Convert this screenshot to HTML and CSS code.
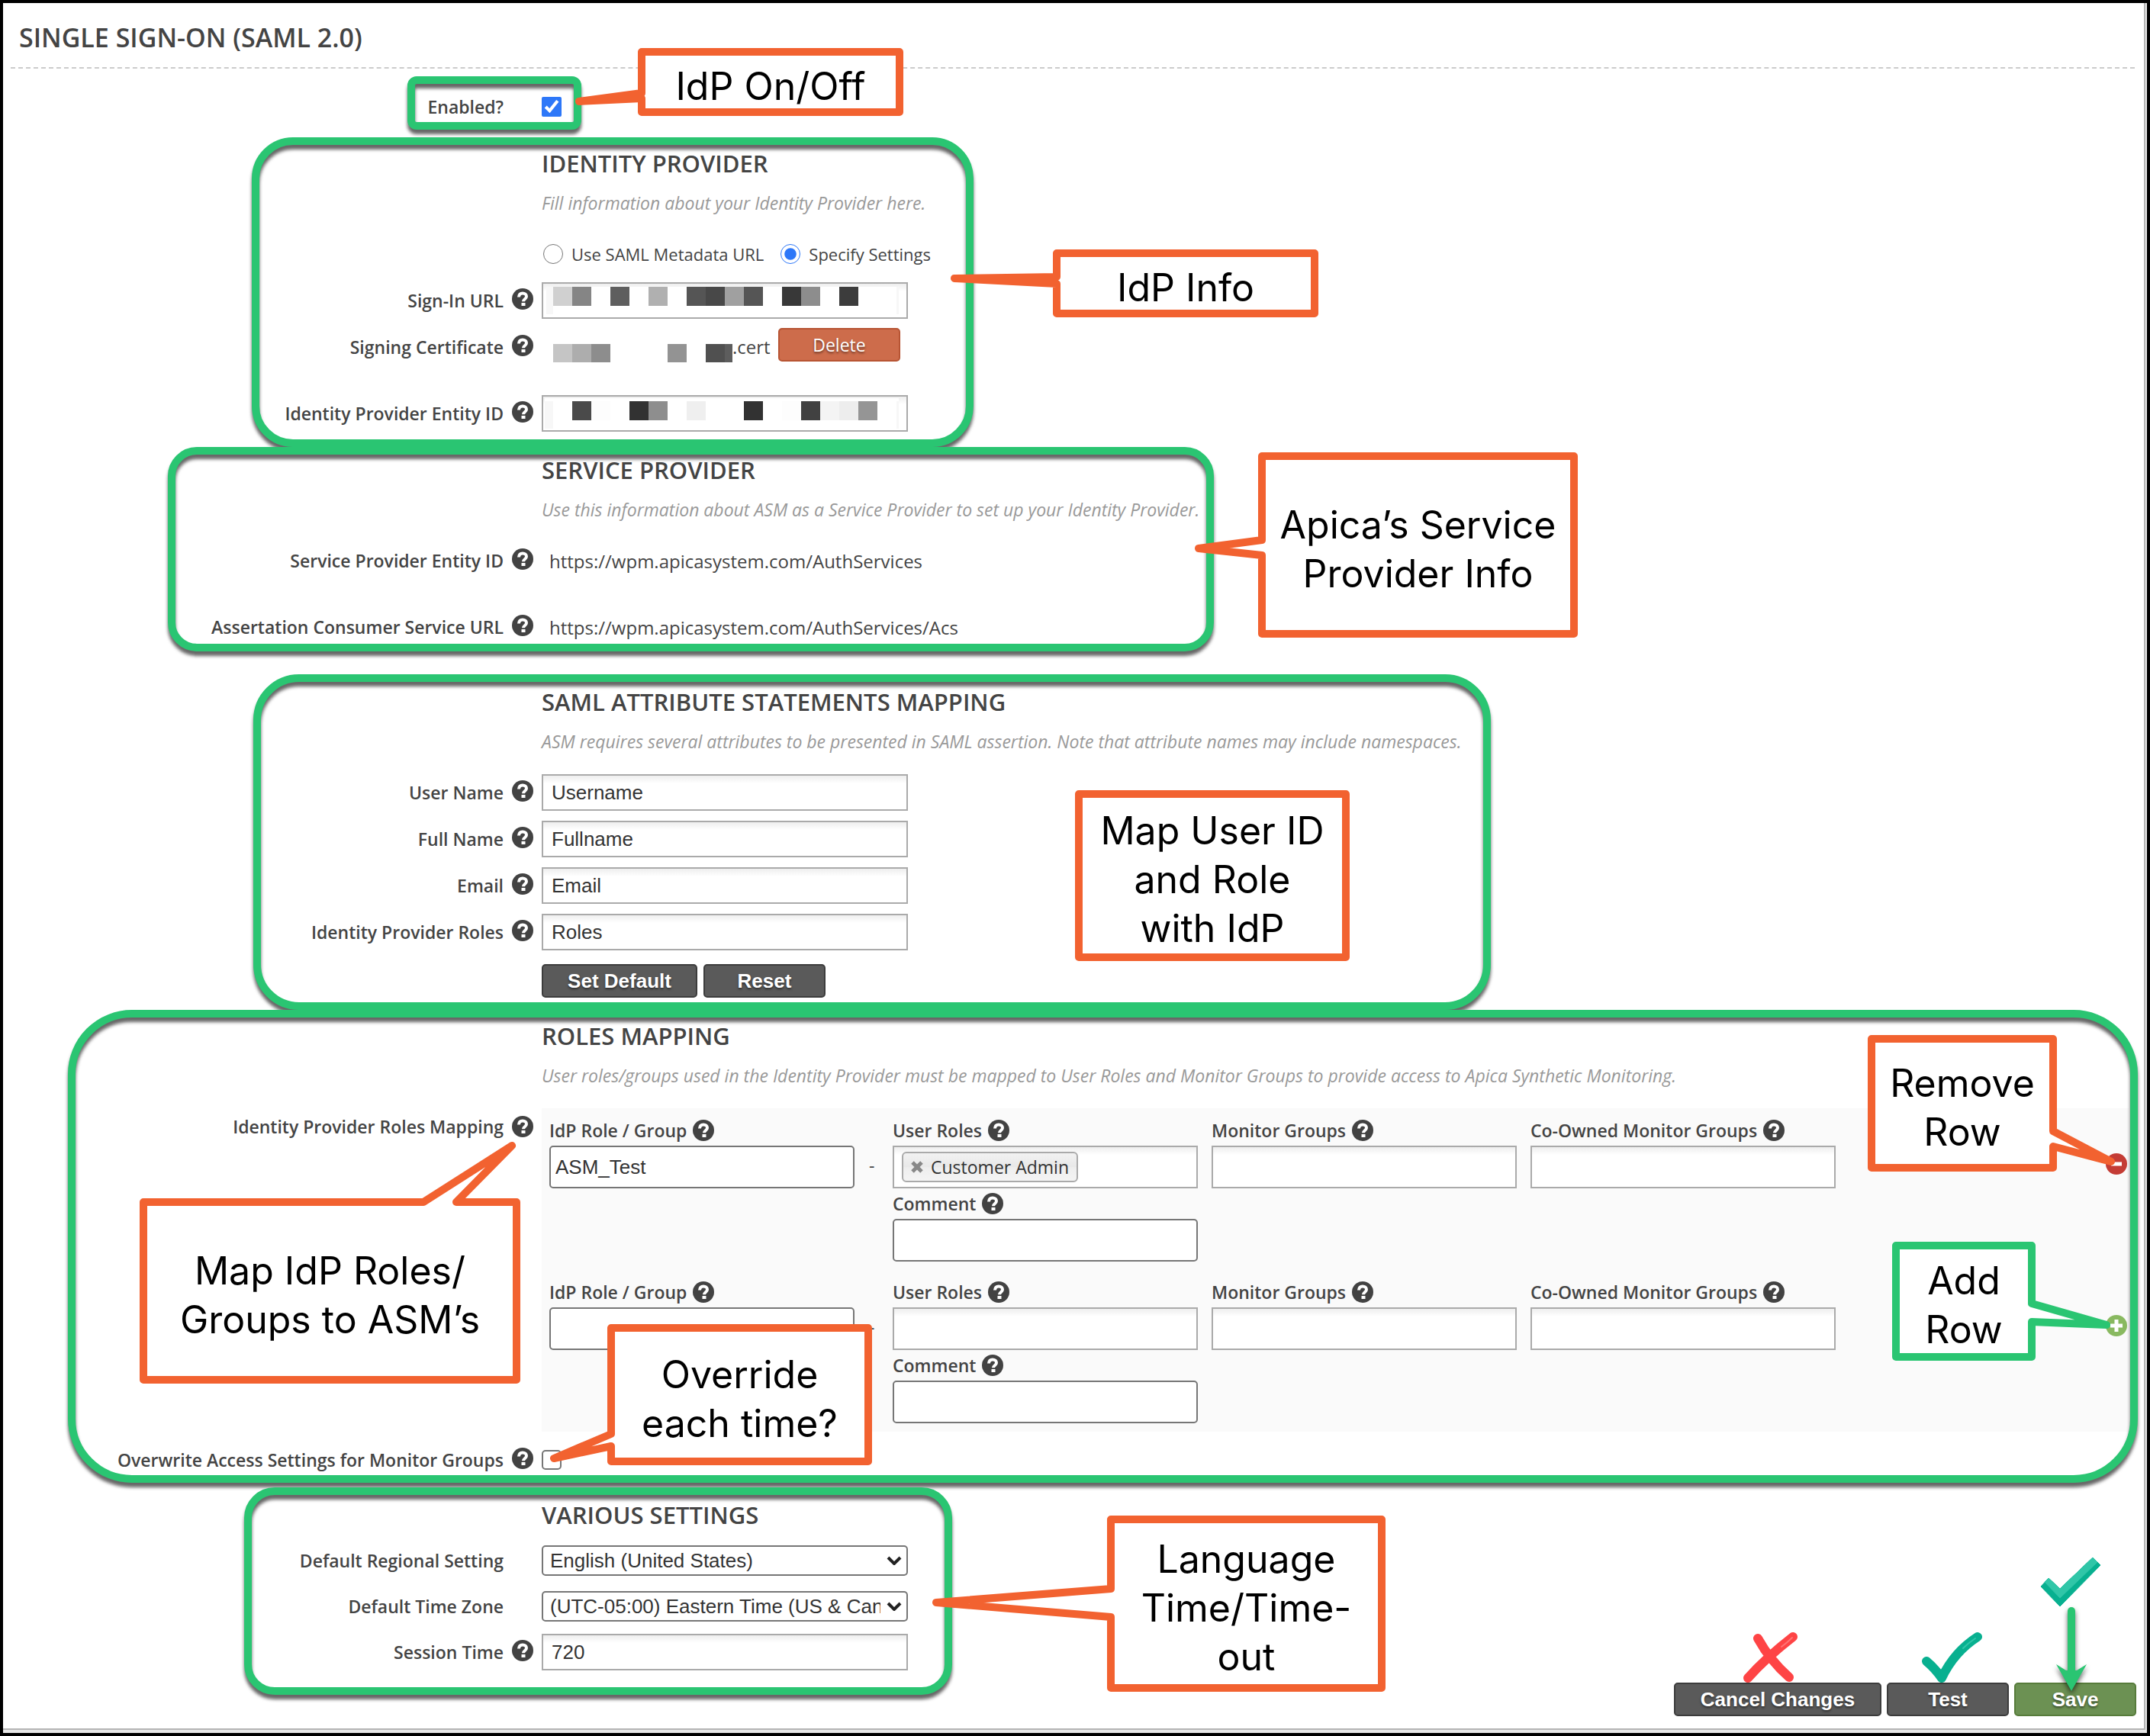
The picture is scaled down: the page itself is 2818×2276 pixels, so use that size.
FILE: index.html
```html
<!DOCTYPE html>
<html lang="en">
<head>
<meta charset="utf-8">
<title>Single Sign-On (SAML 2.0)</title>
<link rel="stylesheet" href="styles.css">
</head>
<body>
<svg class="defs" aria-hidden="true">
  <symbol id="help" viewBox="0 0 28 28">
    <circle cx="14" cy="14" r="14" fill="#424242"/>
    <path d="M9 11.500c.2-3.200 2.200-5 5-5 2.900 0 5 1.700 5 4.200 0 3.200-4 3.400-4 6.600" fill="none" stroke="#fff" stroke-width="4"/>
    <rect x="12.500" y="19" width="5" height="4" fill="#fff"/>
  </symbol>
  <symbol id="chevron" viewBox="0 0 20 12">
    <path d="M2 2l8 8 8-8" fill="none" stroke="#222" stroke-width="4"/>
  </symbol>
</svg>

<div class="shell">
<main class="page">
  <h1 class="title">Single Sign-On (SAML 2.0)</h1>

  <form class="form">
    <div class="row row--first">
      <label class="label" for="enabled">Enabled?</label><span></span>
      <div class="field"><input class="check" type="checkbox" id="enabled" checked></div>
    </div>

    <section class="section">
      <h2 class="heading">Identity Provider</h2>
      <p class="desc">Fill information about your Identity Provider here.</p>
      <div class="row row--lead">
        <span></span><span></span>
        <div class="field radios">
          <label class="radio"><input type="radio" name="mode">Use SAML Metadata URL</label>
          <label class="radio"><input type="radio" name="mode" checked>Specify Settings</label>
        </div>
      </div>
      <div class="row">
        <label class="label" for="signin">Sign-In URL</label><svg class="help"><use href="#help"/></svg>
        <div class="field">
          <input class="input" type="text" id="signin">
          <svg class="mask" viewBox="0 0 480 48" aria-hidden="true">
            <path fill="#fff" d="M6 6h462v36H6z"/><path fill="#f7f7f7" d="M6 6h9v36H6zM465 6h3v36h-3z"/>
            <path fill="#d0d0d0" d="M15 6h25v25H15z"/><path fill="#858585" d="M40 6h25v25H40z"/><path fill="#5e5e5e" d="M90 6h25v25H90z"/><path fill="#b0b0b0" d="M140 6h25v25h-25z"/><path fill="#555" d="M190 6h25v25h-25z"/><path fill="#484848" d="M215 6h25v25h-25z"/><path fill="#a0a0a0" d="M240 6h25v25h-25z"/><path fill="#555" d="M265 6h25v25h-25z"/><path fill="#383838" d="M315 6h25v25h-25z"/><path fill="#8d8d8d" d="M340 6h25v25h-25z"/><path fill="#3c3c3c" d="M390 6h25v25h-25z"/>
          </svg>
        </div>
      </div>
      <div class="row">
        <span class="label">Signing Certificate</span><svg class="help"><use href="#help"/></svg>
        <div class="field cert">
          <svg class="cert-mask" viewBox="0 0 250 48" aria-hidden="true">
            <path fill="#c5c5c5" d="M15 20h25v24H15z"/><path fill="#adadad" d="M40 20h25v24H40z"/><path fill="#8d8d8d" d="M65 20h25v24H65z"/><path fill="#939393" d="M165 20h25v24h-25z"/><path fill="#505050" d="M215 20h25v24h-25z"/><path fill="#5d5d5d" d="M240 20h10v24h-10z"/>
          </svg>
          <span class="cert-name">.cert</span>
          <button class="btn btn--delete" type="button">Delete</button>
        </div>
      </div>
      <div class="row row--spaced">
        <label class="label" for="entity">Identity Provider Entity ID</label><svg class="help"><use href="#help"/></svg>
        <div class="field">
          <input class="input" type="text" id="entity">
          <svg class="mask" viewBox="0 0 480 48" aria-hidden="true">
            <path fill="#fff" d="M4 4h464v40H4z"/><path fill="#f7f7f7" d="M4 8h11v36H4zM465 8h3v36h-3z"/>
            <path fill="#4a4a4a" d="M40 8h25v25H40z"/><path fill="#fdfdfd" d="M65 8h25v25H65z"/><path fill="#323232" d="M115 8h25v25h-25z"/><path fill="#8e8e8e" d="M140 8h25v25h-25z"/><path fill="#efefef" d="M190 8h25v25h-25z"/><path fill="#323232" d="M265 8h25v25h-25z"/><path fill="#fdfdfd" d="M315 8h25v25h-25z"/><path fill="#414141" d="M340 8h25v25h-25z"/><path fill="#f4f4f4" d="M365 8h25v25h-25z"/><path fill="#ededed" d="M390 8h25v25h-25z"/><path fill="#959595" d="M415 8h25v25h-25z"/>
          </svg>
        </div>
      </div>
    </section>

    <section class="section">
      <h2 class="heading">Service Provider</h2>
      <p class="desc">Use this information about ASM as a Service Provider to set up your Identity Provider.</p>
      <div class="row row--lead">
        <span class="label">Service Provider Entity ID</span><svg class="help"><use href="#help"/></svg>
        <div class="field value">https://wpm.apicasystem.com/AuthServices</div>
      </div>
      <div class="row row--spaced">
        <span class="label">Assertation Consumer Service URL</span><svg class="help"><use href="#help"/></svg>
        <div class="field value">https://wpm.apicasystem.com/AuthServices/Acs</div>
      </div>
    </section>

    <section class="section section--apart">
      <h2 class="heading">SAML Attribute Statements Mapping</h2>
      <p class="desc">ASM requires several attributes to be presented in SAML assertion. Note that attribute names may include namespaces.</p>
      <div class="row row--lead">
        <label class="label" for="user">User Name</label><svg class="help"><use href="#help"/></svg>
        <div class="field"><input class="input" type="text" id="user" value="Username"></div>
      </div>
      <div class="row">
        <label class="label" for="full">Full Name</label><svg class="help"><use href="#help"/></svg>
        <div class="field"><input class="input" type="text" id="full" value="Fullname"></div>
      </div>
      <div class="row">
        <label class="label" for="email">Email</label><svg class="help"><use href="#help"/></svg>
        <div class="field"><input class="input" type="text" id="email" value="Email"></div>
      </div>
      <div class="row">
        <label class="label" for="roles">Identity Provider Roles</label><svg class="help"><use href="#help"/></svg>
        <div class="field"><input class="input" type="text" id="roles" value="Roles"></div>
      </div>
      <div class="actions">
        <button class="btn btn--default" type="button">Set Default</button>
        <button class="btn" type="button">Reset</button>
      </div>
    </section>

    <section class="section">
      <h2 class="heading">Roles Mapping</h2>
      <p class="desc">User roles/groups used in the Identity Provider must be mapped to User Roles and Monitor Groups to provide access to Apica Synthetic Monitoring.</p>
      <div class="row row--lead row--top">
        <span class="label">Identity Provider Roles Mapping</span><svg class="help"><use href="#help"/></svg>
        <div class="panel">
          <div class="mapping">
            <div class="cell">
              <label class="cell-label" for="r1">IdP Role / Group <svg class="icon"><use href="#help"/></svg></label>
              <input class="box box--round" type="text" id="r1" value="ASM_Test">
            </div>
            <span class="dash">-</span>
            <div class="cell">
              <span class="cell-label">User Roles <svg class="icon"><use href="#help"/></svg></span>
              <div class="box tags">
                <span class="chip"><button class="chip-x" type="button" aria-label="Remove"><svg viewBox="0 0 16 16"><path d="M2 2l12 12M14 2L2 14" stroke="#888" stroke-width="5"/></svg></button>Customer Admin</span>
              </div>
              <label class="cell-label cell-label--next" for="c1">Comment <svg class="icon"><use href="#help"/></svg></label>
              <input class="box box--round" type="text" id="c1">
            </div>
            <div class="cell">
              <label class="cell-label" for="m1">Monitor Groups <svg class="icon"><use href="#help"/></svg></label>
              <input class="box" type="text" id="m1">
            </div>
            <div class="cell">
              <label class="cell-label" for="o1">Co-Owned Monitor Groups <svg class="icon"><use href="#help"/></svg></label>
              <input class="box" type="text" id="o1">
            </div>
            <button class="row-btn" type="button" aria-label="Remove row"><svg viewBox="0 0 28 28"><circle cx="14" cy="14" r="14" fill="#c43c35"/><path d="M7 14h14" stroke="#fff" stroke-width="5"/></svg></button>
          </div>
          <div class="mapping">
            <div class="cell">
              <label class="cell-label" for="r2">IdP Role / Group <svg class="icon"><use href="#help"/></svg></label>
              <input class="box box--round" type="text" id="r2">
            </div>
            <span class="dash">-</span>
            <div class="cell">
              <label class="cell-label" for="u2">User Roles <svg class="icon"><use href="#help"/></svg></label>
              <input class="box" type="text" id="u2">
              <label class="cell-label cell-label--next" for="c2">Comment <svg class="icon"><use href="#help"/></svg></label>
              <input class="box box--round" type="text" id="c2">
            </div>
            <div class="cell">
              <label class="cell-label" for="m2">Monitor Groups <svg class="icon"><use href="#help"/></svg></label>
              <input class="box" type="text" id="m2">
            </div>
            <div class="cell">
              <label class="cell-label" for="o2">Co-Owned Monitor Groups <svg class="icon"><use href="#help"/></svg></label>
              <input class="box" type="text" id="o2">
            </div>
            <button class="row-btn" type="button" aria-label="Add row"><svg viewBox="0 0 28 28"><circle cx="14" cy="14" r="14" fill="#89b960"/><path d="M6 14h16M14 6v16" stroke="#fff" stroke-width="5"/></svg></button>
          </div>
        </div>
      </div>
      <div class="row">
        <label class="label" for="overwrite">Overwrite Access Settings for Monitor Groups</label><svg class="help"><use href="#help"/></svg>
        <div class="field"><input class="check check--plain" type="checkbox" id="overwrite"></div>
      </div>
    </section>

    <section class="section section--close">
      <h2 class="heading">Various Settings</h2>
      <div class="row row--select">
        <label class="label" for="region">Default Regional Setting</label><span></span>
        <div class="field"><select class="select" id="region"><option>English (United States)</option></select><svg class="chevron"><use href="#chevron"/></svg></div>
      </div>
      <div class="row row--tight">
        <label class="label" for="zone">Default Time Zone</label><span></span>
        <div class="field"><select class="select" id="zone"><option>(UTC-05:00) Eastern Time (US &amp; Canada)</option></select><svg class="chevron"><use href="#chevron"/></svg></div>
      </div>
      <div class="row row--tight">
        <label class="label" for="session">Session Time</label><svg class="help"><use href="#help"/></svg>
        <div class="field"><input class="input" type="text" id="session" value="720"></div>
      </div>
    </section>

    <footer class="footer">
      <button class="btn btn--cancel" type="button">Cancel Changes</button>
      <button class="btn" type="button">Test</button>
      <button class="btn btn--save" type="submit">Save</button>
    </footer>
  </form>
</main>
</div>

<div class="outline outline--enabled"></div>
<div class="outline outline--idp"></div>
<div class="outline outline--sp"></div>
<div class="outline outline--attrs"></div>
<div class="outline outline--roles"></div>
<div class="outline outline--various"></div>

<div class="callout callout--onoff"><svg><path d="M5 5H343V84H5V66L-77 70L5 59Z"/></svg><span>IdP On/Off</span></div>
<div class="callout callout--info"><svg><path d="M5 5H343V84H5V45L-129 38L5 36Z"/></svg><span>IdP Info</span></div>
<div class="callout callout--service"><svg><path d="M5 5H414V238H5V135L-78 126L5 115Z"/></svg><span>Apica’s Service<br>Provider Info</span></div>
<div class="callout callout--map"><svg><path d="M5 5H355V219H5Z"/></svg><span>Map User ID<br>and Role<br>with IdP</span></div>
<div class="callout callout--groups"><svg><path d="M5 5H372L488 -69L415 5H494V238H5Z"/></svg><span>Map IdP Roles/<br>Groups to ASM’s</span></div>
<div class="callout callout--override"><svg><path d="M5 5H342V180H5V160L-70 176L5 144Z"/></svg><span>Override<br>each time?</span></div>
<div class="callout callout--remove"><svg><path d="M5 5H243V126L319 166L243 146V174H5Z"/></svg><span>Remove<br>Row</span></div>
<div class="callout callout--add"><svg><path d="M5 5H183V81L281 109L183 105V151H5Z"/></svg><span>Add<br>Row</span></div>
<div class="callout callout--lang"><svg><path d="M5 5H360V226H5V133L-224 114L5 96Z"/></svg><span>Language<br>Time/Time-<br>out</span></div>

<svg class="mark mark--cross" viewBox="0 0 76 68" aria-hidden="true">
  <path d="M66 7Q30 35 7 61M20 9Q36 38 61 60" fill="none" stroke="#fe4445" stroke-width="12" stroke-linecap="round"/>
  <path d="M65 8Q58 15 51 20" fill="none" stroke="#ff7474" stroke-width="2" stroke-linecap="round"/>
</svg>
<svg class="mark mark--tick" viewBox="0 0 82 68" aria-hidden="true">
  <path d="M7 39Q18 48 27 61Q43 27 74 7" fill="none" stroke="#08b090" stroke-width="12" stroke-linecap="round" stroke-linejoin="round"/>
  <path d="M71 9Q62 15 55 22" fill="none" stroke="#30c6a8" stroke-width="2" stroke-linecap="round"/>
</svg>
<svg class="mark mark--bold" viewBox="0 0 80 66" aria-hidden="true">
  <path d="M11 28L26 42L69 1L79 11L26 65L1 39Z" fill="#08b090" stroke="#08b090" stroke-linejoin="round"/>
  <path d="M6 33L11 28L26 42L69 1L75 7L26 54Z" fill="#30c6a8" stroke="#30c6a8" stroke-linejoin="round"/>
</svg>
<svg class="mark mark--arrow" viewBox="0 0 40 112" aria-hidden="true">
  <path d="M20 5V92" stroke="#2ac572" stroke-width="10" stroke-linecap="round"/>
  <path d="M0 75L13 83H27L40 75L20 110Z" fill="#2ac572"/>
</svg>
</body>
</html>
```

FILE: styles.css
```css
* { box-sizing: border-box; }

body {
  position: relative;
  margin: 0;
  padding: 4px;
  background: #000;
  color: #444;
  font-family: "Open Sans", "Noto Sans", sans-serif;
  font-size: 23px;
}

.defs { display: none; }

.shell {
  padding: 0 2px 4px 0;
  background: #e8e8e8;
}

.page {
  padding-top: 25px;
  border: solid #b4b4b4;
  border-width: 0 2px 2px 0;
  background: #fff;
}

.title {
  margin: 0 12px 0 10px;
  padding: 0 11px 19px;
  border-bottom: 2px dashed #ccc;
  font-size: 34px;
  font-weight: 600;
  line-height: 40px;
  text-transform: uppercase;
}

/* Form rows: label, help icon, field */
.row {
  display: grid;
  grid-template-columns: 656px 28px 1fr;
  column-gap: 11px;
  align-items: center;
  min-height: 48px;
  margin-top: 13px;
}
.row--first { margin-top: 26px; }
.row--lead { margin-top: 27px; }
.row--spaced { margin-top: 39px; }
.row--select { margin-top: 16px; }
.row--tight { margin-top: 12px; }
.row--top { align-items: start; }
.row--top > .help { margin-top: 10px; }

.label {
  font-weight: 600;
  line-height: 48px;
  text-align: right;
}
.help { width: 28px; height: 28px; margin-bottom: 4px; }

.field {
  position: relative;
  display: flex;
  align-items: center;
  width: 480px;
  height: 48px;
}

.section { margin-top: 30px; }
.section--apart { margin-top: 54px; }
.section--close { margin-top: 28px; }

.heading, .desc { margin: 0 0 0 706px; }
.heading {
  font-size: 31px;
  font-weight: 600;
  line-height: 40px;
  text-transform: uppercase;
}
.desc {
  margin-top: 16px;
  color: #999;
  font-style: italic;
  line-height: 32px;
}

.value { width: auto; padding-left: 10px; font-size: 24px; }

input, select, button { font-family: "Liberation Sans", Arial, sans-serif; font-size: 26px; }

.check {
  width: 26px;
  height: 26px;
  margin: 0;
  accent-color: #2d77f8;
}
.check--plain {
  appearance: none;
  border: 2px solid #767676;
  border-radius: 5px;
  background: #fff;
}

.radios { width: auto; gap: 20px; }
.radio { display: flex; align-items: center; gap: 11px; font-size: 22px; }
.radio input {
  width: 26px;
  height: 26px;
  margin: 0 0 0 2px;
  accent-color: #2d77f8;
}

.input, .box {
  width: 100%;
  height: 48px;
  padding: 0 11px;
  border: 2px solid #aaa;
  background: #fff linear-gradient(#eee, #fff 10px) no-repeat;
  color: #333;
}

.mask { position: absolute; inset: 0; pointer-events: none; }

.cert { font-size: 24px; }
.cert-mask { width: 250px; height: 48px; }
.cert-name { width: 60px; line-height: 48px; }

.select {
  width: 100%;
  height: 40px;
  padding: 0 34px 0 9px;
  border: 2px solid #767676;
  border-radius: 5px;
  appearance: none;
  background: #fff;
  color: #333;
}
.chevron {
  position: absolute;
  right: 8px;
  width: 20px;
  height: 12px;
  pointer-events: none;
}

.btn {
  width: 160px;
  height: 44px;
  padding: 0;
  border: 2px solid #3c3c3c;
  border-radius: 5px;
  background: #5a5a5a;
  color: #fff;
  font-weight: 700;
  text-shadow: 0 2px 3px rgba(0, 0, 0, .5);
}
.btn--delete {
  margin-bottom: 6px;
  border-color: #b75433;
  background: #cd6c4b;
  font-family: "Open Sans", sans-serif;
  font-size: 23px;
  font-weight: 400;
}
.btn--default { width: 204px; }
.btn--cancel { width: 272px; }
.btn--save { border-color: #577c3b; background: #6c9153; }

.actions {
  display: flex;
  gap: 8px;
  margin: 18px 0 0 706px;
}

/* Roles mapping */
.panel {
  margin-right: 20px;
  padding-left: 10px;
  background: #fafafa;
}
.mapping {
  display: flex;
  align-items: flex-start;
  height: 212px;
  padding-top: 13px;
}
.cell { width: 400px; }
.cell + .cell { margin-left: 18px; }
.cell-label {
  display: flex;
  align-items: center;
  gap: 8px;
  margin-bottom: 4px;
  font-weight: 600;
  line-height: 32px;
}
.cell-label--next { margin-top: 4px; }
.icon { width: 28px; height: 28px; }
.box { display: block; height: 56px; }
.box--round {
  padding: 0 6px;
  border-color: #767676;
  border-radius: 5px;
  background: #fff;
}
.dash { width: 50px; padding: 0 19px; line-height: 124px; }
.tags { display: flex; align-items: center; padding: 0 10px; }
.chip {
  display: flex;
  align-items: center;
  gap: 10px;
  height: 40px;
  padding: 0 10px;
  border: 2px solid #aaa;
  border-radius: 6px;
  background: linear-gradient(#f2f2f2, #e8e8e8 50%, #eee 52%, #f4f4f4);
  color: #333;
  line-height: 32px;
}
.chip-x, .row-btn { padding: 0; border: 0; background: none; }
.chip-x { width: 16px; height: 16px; }
.chip-x svg, .row-btn svg { display: block; }
.row-btn { width: 28px; height: 28px; margin: 46px 2px 0 auto; }

.footer {
  display: flex;
  justify-content: flex-end;
  gap: 7px;
  padding: 16px 10px;
}

/* Highlight outlines drawn over the form */
.outline {
  position: absolute;
  border: 10px solid #2ac572;
  filter: drop-shadow(0 6px 2px rgba(0, 0, 0, .6));
  pointer-events: none;
}
.outline--enabled { left: 534px; top: 100px; width: 228px; height: 70px; border-radius: 12px; }
.outline--idp { left: 330px; top: 180px; width: 946px; height: 406px; border-radius: 54px; }
.outline--sp { left: 220px; top: 586px; width: 1371px; height: 268px; border-radius: 38px; }
.outline--attrs { left: 332px; top: 884px; width: 1622px; height: 440px; border-radius: 60px; }
.outline--roles { left: 89px; top: 1324px; width: 2713px; height: 620px; border-radius: 84px; }
.outline--various { left: 320px; top: 1950px; width: 928px; height: 272px; border-radius: 40px; }

/* Callouts */
.callout {
  position: absolute;
  display: flex;
  align-items: center;
  justify-content: center;
  padding-top: 10px;
  color: #000;
  font-family: Inter, "Liberation Sans", sans-serif;
  font-size: 50px;
  line-height: 64px;
  text-align: center;
  white-space: nowrap;
}
.callout svg {
  position: absolute;
  inset: 0;
  width: 100%;
  height: 100%;
  overflow: visible;
}
.callout path {
  fill: #fff;
  stroke: #f26230;
  stroke-width: 10;
  stroke-linejoin: round;
}
.callout span { position: relative; }
.callout--onoff { left: 836px; top: 63px; width: 348px; height: 89px; }
.callout--info { left: 1380px; top: 327px; width: 348px; height: 89px; }
.callout--service { left: 1649px; top: 593px; width: 419px; height: 243px; }
.callout--map { left: 1409px; top: 1036px; width: 360px; height: 224px; }
.callout--groups { left: 183px; top: 1571px; width: 499px; height: 243px; }
.callout--override { left: 796px; top: 1736px; width: 347px; height: 185px; }
.callout--remove { left: 2448px; top: 1357px; width: 248px; height: 179px; }
.callout--add { left: 2480px; top: 1628px; width: 188px; height: 156px; }
.callout--add path { stroke: #2ac572; }
.callout--lang { left: 1451px; top: 1987px; width: 365px; height: 231px; }

.mark { position: absolute; overflow: visible; pointer-events: none; }
.mark--cross { left: 2284px; top: 2139px; width: 76px; height: 68px; }
.mark--tick { left: 2518px; top: 2139px; width: 82px; height: 68px; }
.mark--bold { left: 2674px; top: 2041px; width: 80px; height: 66px; }
.mark--arrow {
  left: 2695px;
  top: 2107px;
  width: 40px;
  height: 112px;
  filter: drop-shadow(0 4px 3px rgba(0, 0, 0, .6));
}
```
